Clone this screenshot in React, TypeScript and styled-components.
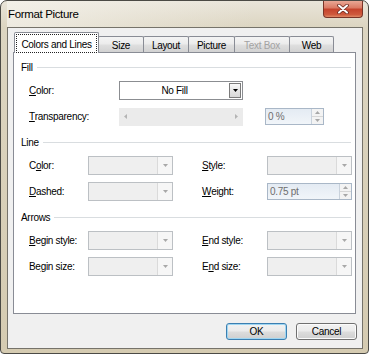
import React from "react";
import styled, { createGlobalStyle } from "styled-components";

const GlobalStyle = createGlobalStyle`
  html, body {
    margin: 0;
    padding: 0;
    background: #ffffff;
  }
  body {
    font-family: "Liberation Sans", Arial, sans-serif;
    font-size: 10px;
    letter-spacing: -0.3px;
    color: #000;
  }
`;

const Window = styled.div`
  box-sizing: border-box;
  width: 369px;
  border: 1px solid #4b4a45;
  border-radius: 7px 7px 4px 4px;
  background: linear-gradient(to bottom, #e9e5da 0, #dcd5c1 26px, #d5cbb1 100%);
  display: flex;
  flex-direction: column;
  padding: 0 5px 4px 6px;
`;

const TitleBar = styled.div`
  height: 26px;
  display: flex;
  justify-content: space-between;
  align-items: flex-start;
  background: linear-gradient(to right, rgba(246, 244, 238, 0.7), rgba(246, 244, 238, 0) 70%);
`;

const Title = styled.div`
  font-size: 11.5px;
  letter-spacing: -0.35px;
  line-height: 26px;
  padding-left: 1px;
  color: #000;
`;

const CloseButton = styled.div`
  box-sizing: border-box;
  width: 40px;
  height: 17px;
  border: 1px solid #7a3427;
  border-top: none;
  border-radius: 0 0 4px 4px;
  background: linear-gradient(to bottom, #e9a795 0%, #db7b65 42%, #c5432c 52%, #cf5a3d 85%, #e08a66 100%);
  display: flex;
  align-items: center;
  justify-content: center;
`;

const Client = styled.div`
  border: 1px solid #76736a;
  background: #f0f0f0;
  display: flex;
  flex-direction: column;
  padding: 4px 6px 8px 5px;
`;

const TabStrip = styled.div`
  display: flex;
  align-items: flex-end;
  padding-left: 1px;
  height: 20px;
`;

const Tab = styled.div<{ $width: number; $active?: boolean; $disabled?: boolean }>`
  box-sizing: border-box;
  width: ${(p) => p.$width}px;
  height: ${(p) => (p.$active ? 21 : 16)}px;
  margin-left: ${(p) => (p.$active ? 0 : -1)}px;
  margin-bottom: ${(p) => (p.$active ? -1 : 0)}px;
  border: 1px solid #898c95;
  border-bottom: none;
  border-radius: 2px 2px 0 0;
  background: ${(p) =>
    p.$active
      ? "#ffffff"
      : "linear-gradient(to bottom, #f4f4f4 0%, #ececec 45%, #dedede 55%, #d2d2d2 100%)"};
  color: ${(p) => (p.$disabled ? "#a3a3a3" : "#000")};
  display: flex;
  align-items: center;
  justify-content: center;
  position: relative;
  z-index: ${(p) => (p.$active ? 2 : 1)};
  padding: ${(p) => (p.$active ? "1px 1px 0 1px" : "1px 0 0 0")};
`;

const Focus = styled.div`
  box-sizing: border-box;
  flex: 1;
  align-self: stretch;
  border: 1px dotted #222;
  display: flex;
  align-items: center;
  justify-content: center;
  padding-top: 1px;
`;

const Panel = styled.div`
  box-sizing: border-box;
  height: 262px;
  border: 1px solid #898c95;
  background: #ffffff;
  padding: 7px 2px 0 7px;
  display: flex;
  flex-direction: column;
`;

const Section = styled.div<{ $first?: boolean }>`
  display: flex;
  flex-direction: column;
  gap: 7px;
  margin-top: ${(p) => (p.$first ? 0 : 9)}px;
`;

const Heading = styled.div`
  height: 14px;
  display: flex;
  align-items: center;
  gap: 4px;
`;

const Rule = styled.div`
  flex: 1;
  height: 1px;
  background: #d9dde0;
  margin-right: 2px;
`;

const Grid = styled.div<{ $cols: string }>`
  display: grid;
  grid-template-columns: ${(p) => p.$cols};
  row-gap: 7px;
  padding-left: 8px;
  align-items: center;
`;

const Label = styled.div`
  height: 19px;
  display: flex;
  align-items: center;
  white-space: nowrap;
`;

const Combo = styled.div<{ $disabled?: boolean }>`
  box-sizing: border-box;
  height: 19px;
  display: flex;
  border: 1px solid ${(p) => (p.$disabled ? "#bcc0c4" : "#8b8d91")};
  background: ${(p) => (p.$disabled ? "#efefef" : "#ffffff")};
`;

const ComboText = styled.div`
  flex: 1;
  display: flex;
  align-items: center;
  justify-content: center;
`;

const DropButton = styled.div`
  box-sizing: border-box;
  width: 12px;
  height: 15px;
  margin: 1px 1px 0 0;
  border: 1px solid #7b7b7b;
  background: linear-gradient(to bottom, #fafafa, #e6e6e6 50%, #d8d8d8);
  display: flex;
  align-items: center;
  justify-content: center;
`;

const DropZone = styled.div`
  box-sizing: border-box;
  width: 15px;
  margin-left: auto;
  border-left: 1px solid #dadada;
  background: #f6f6f6;
  display: flex;
  align-items: center;
  justify-content: center;
`;

const Slider = styled.div`
  box-sizing: border-box;
  height: 18px;
  background: #ebebeb;
  display: flex;
  align-items: center;
  justify-content: space-between;
  padding: 0 5px;
`;

const Spin = styled.div`
  box-sizing: border-box;
  height: 17px;
  display: flex;
  border: 1px solid #a9b7c7;
  background: linear-gradient(to bottom, #e4ebf3, #f1f5f9);
`;

const SpinText = styled.div`
  flex: 1;
  display: flex;
  align-items: center;
  padding-left: 2px;
  color: #6e6e6e;
`;

const SpinButtons = styled.div`
  box-sizing: border-box;
  width: 12px;
  border-left: 1px solid #c9d2dc;
  background: #f3f3f3;
  display: flex;
  flex-direction: column;
`;

const SpinHalf = styled.div<{ $top?: boolean }>`
  flex: 1;
  display: flex;
  align-items: center;
  justify-content: center;
  border-bottom: ${(p) => (p.$top ? "1px solid #d6d6d6" : "none")};
`;

const ButtonRow = styled.div`
  display: flex;
  justify-content: flex-end;
  gap: 9px;
  margin-top: 9px;
  margin-right: -1px;
`;

const Button = styled.div<{ $default?: boolean }>`
  box-sizing: border-box;
  width: 61px;
  height: 17px;
  border: 1px solid ${(p) => (p.$default ? "#3c7fb1" : "#707070")};
  border-radius: 3px;
  background: linear-gradient(to bottom, #f2f2f2 0%, #ebebeb 48%, #dddddd 52%, #cfcfcf 100%);
  box-shadow: ${(p) => (p.$default ? "inset 0 0 0 1px #9fd6f2" : "inset 0 0 0 1px #fbfbfb")};
  display: flex;
  align-items: center;
  justify-content: center;
`;

const Down = ({ color = "#000" }: { color?: string }) => (
  <svg width="5" height="3" viewBox="0 0 5 3">
    <path d="M0 0h5L2.5 3z" fill={color} />
  </svg>
);

const Up = ({ color }: { color: string }) => (
  <svg width="5" height="3" viewBox="0 0 5 3">
    <path d="M0 3h5L2.5 0z" fill={color} />
  </svg>
);

const Side = ({ dir }: { dir: "l" | "r" }) => (
  <svg width="3" height="5" viewBox="0 0 3 5">
    <path d={dir === "l" ? "M3 0v5L0 2.5z" : "M0 0v5L3 2.5z"} fill="#b4b4b4" />
  </svg>
);

const DisabledCombo = () => (
  <Combo $disabled>
    <DropZone>
      <Down color="#a8a8a8" />
    </DropZone>
  </Combo>
);

const SpinBox = ({ value }: { value: string }) => (
  <Spin>
    <SpinText>{value}</SpinText>
    <SpinButtons>
      <SpinHalf $top>
        <Up color="#a7a7a7" />
      </SpinHalf>
      <SpinHalf>
        <Down color="#a7a7a7" />
      </SpinHalf>
    </SpinButtons>
  </Spin>
);

const Gap = styled.div``;

export default function App() {
  return (
    <>
      <GlobalStyle />
      <Window>
        <TitleBar>
          <Title>Format Picture</Title>
          <CloseButton>
            <svg width="12" height="10" viewBox="0 0 12 10">
              <path d="M2 1.5l8 7M10 1.5l-8 7" stroke="#6a2a20" strokeWidth="3.6" strokeLinecap="round" />
              <path d="M2 1.5l8 7M10 1.5l-8 7" stroke="#ffffff" strokeWidth="2" strokeLinecap="round" />
            </svg>
          </CloseButton>
        </TitleBar>
        <Client>
          <TabStrip>
            <Tab $width={85} $active>
              <Focus>Colors and Lines</Focus>
            </Tab>
            <Tab $width={46}>Size</Tab>
            <Tab $width={46}>Layout</Tab>
            <Tab $width={47}>Picture</Tab>
            <Tab $width={56} $disabled>
              Text Box
            </Tab>
            <Tab $width={45}>Web</Tab>
          </TabStrip>
          <Panel>
            <Section $first>
              <Heading>
                Fill
                <Rule />
              </Heading>
              <Grid $cols="90px 124px 22px 59px">
                <Label>
                  <u>C</u>olor:
                </Label>
                <Combo>
                  <ComboText>No Fill</ComboText>
                  <DropButton>
                    <Down />
                  </DropButton>
                </Combo>
                <Gap />
                <Gap />
                <Label>
                  <u>T</u>ransparency:
                </Label>
                <Slider>
                  <Side dir="l" />
                  <Side dir="r" />
                </Slider>
                <Gap />
                <SpinBox value="0 %" />
              </Grid>
            </Section>
            <Section>
              <Heading>
                Line
                <Rule />
              </Heading>
              <Grid $cols="59px 85px 29px 65px 85px">
                <Label>
                  C<u>o</u>lor:
                </Label>
                <DisabledCombo />
                <Gap />
                <Label>
                  <u>S</u>tyle:
                </Label>
                <DisabledCombo />
                <Label>
                  <u>D</u>ashed:
                </Label>
                <DisabledCombo />
                <Gap />
                <Label>
                  <u>W</u>eight:
                </Label>
                <SpinBox value="0.75 pt" />
              </Grid>
            </Section>
            <Section>
              <Heading>
                Arrows
                <Rule />
              </Heading>
              <Grid $cols="59px 85px 29px 65px 85px">
                <Label>
                  <u>B</u>egin style:
                </Label>
                <DisabledCombo />
                <Gap />
                <Label>
                  <u>E</u>nd style:
                </Label>
                <DisabledCombo />
                <Label>
                  Be<u>g</u>in size:
                </Label>
                <DisabledCombo />
                <Gap />
                <Label>
                  E<u>n</u>d size:
                </Label>
                <DisabledCombo />
              </Grid>
            </Section>
          </Panel>
          <ButtonRow>
            <Button $default>OK</Button>
            <Button>Cancel</Button>
          </ButtonRow>
        </Client>
      </Window>
    </>
  );
}
